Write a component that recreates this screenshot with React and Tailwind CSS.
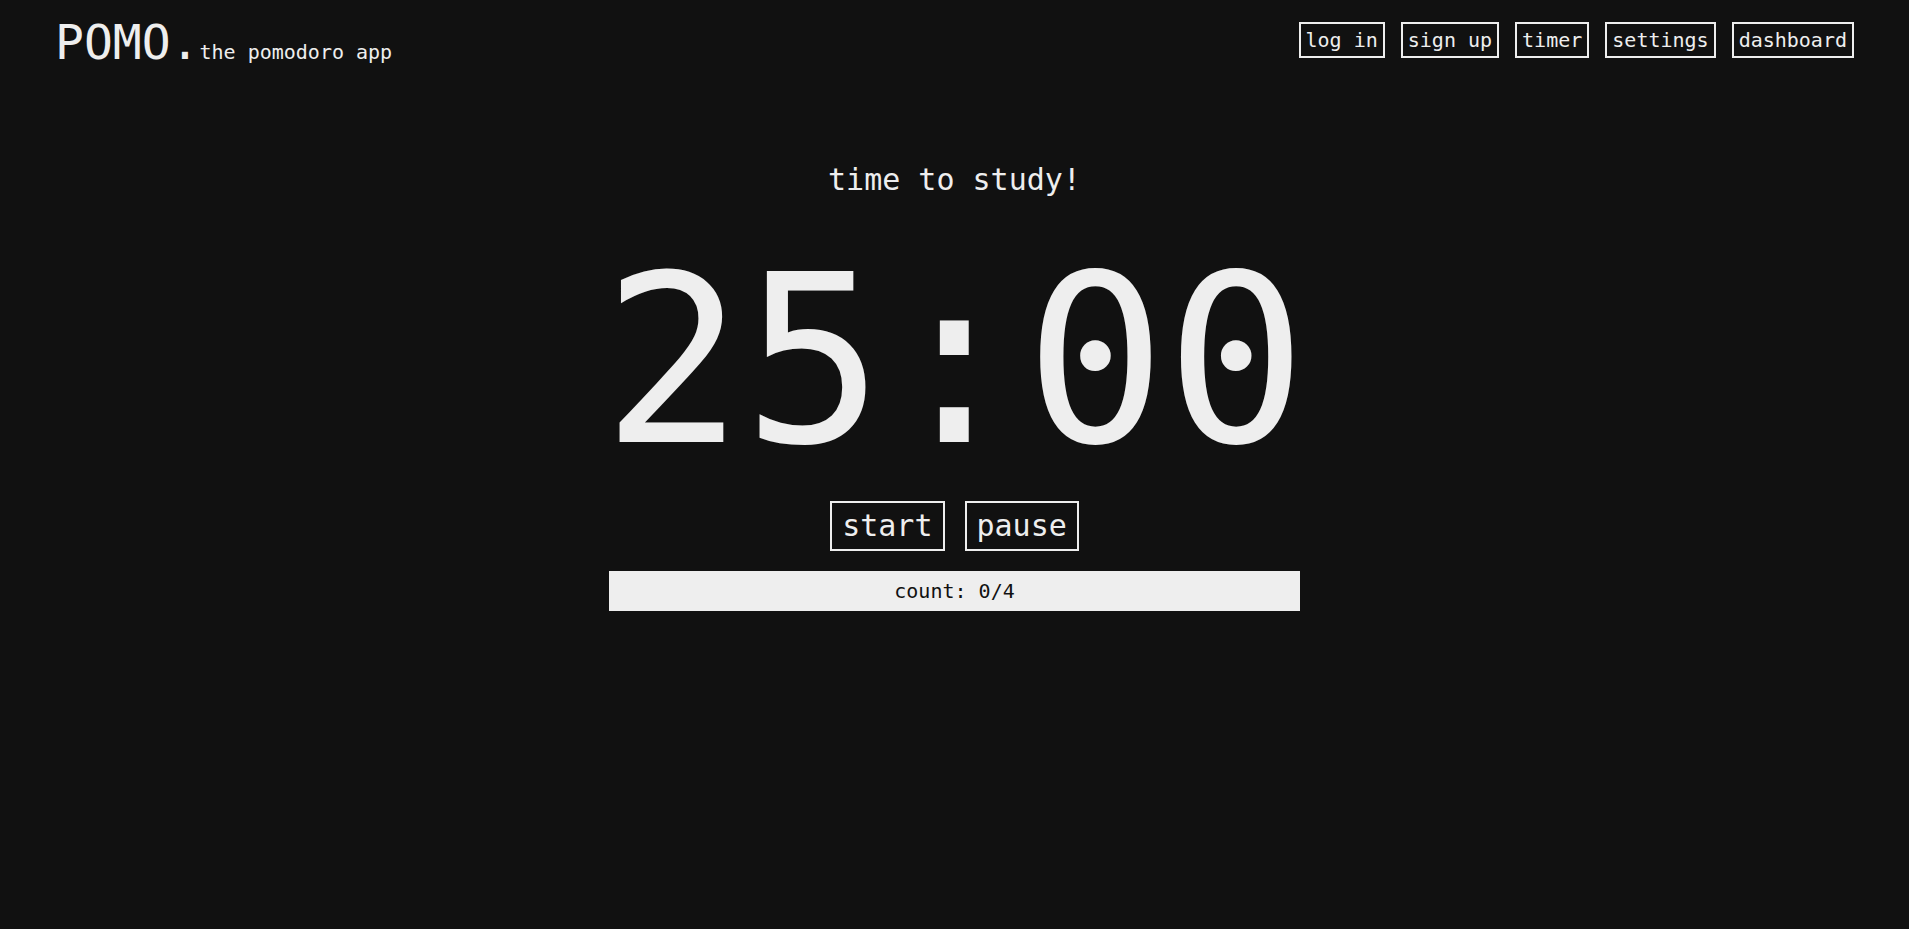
import { useState } from "react";

const navItems = ["log in", "sign up", "timer", "settings", "dashboard"];

export default function App() {
  const [count] = useState(0);

  return (
    <div className="min-h-screen w-full bg-[#111111] text-[#eeeeee] font-['DejaVu_Sans_Mono',monospace]">
      {/* header */}
      <header className="flex items-start justify-between px-[55px] pt-[14px]">
        <div className="flex items-baseline">
          <span className="text-[48px] leading-[56px]">POMO.</span>
          <span className="text-[20px]">the pomodoro app</span>
        </div>
        <nav className="flex gap-4 pt-[8px]">
          {navItems.map((item) => (
            <button
              key={item}
              type="button"
              className="border-2 border-[#eeeeee] px-[5px] py-[2px] text-[20px] leading-7"
            >
              {item}
            </button>
          ))}
        </nav>
      </header>

      {/* timer */}
      <main className="flex flex-col items-center">
        <p className="mt-[92px] text-[30px] leading-9">time to study!</p>
        <div className="mt-[46px] text-[234px] leading-none">25:00</div>
        <div className="mt-[23px] flex gap-5">
          <button type="button" className="border-2 border-[#eeeeee] px-[10px] py-[5px] text-[30px] leading-9">
            start
          </button>
          <button type="button" className="border-2 border-[#eeeeee] px-[10px] py-[5px] text-[30px] leading-9">
            pause
          </button>
        </div>
        <div className="mt-5 w-[691px] bg-[#eeeeee] py-[6px] text-center text-[20px] leading-7 text-[#111111]">
          count: {count}/4
        </div>
      </main>
    </div>
  );
}
